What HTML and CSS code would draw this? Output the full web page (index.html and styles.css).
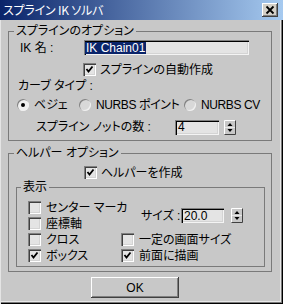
FILE: index.html
```html
<!DOCTYPE html>
<html>
<head>
<meta charset="utf-8">
<link rel="stylesheet" href="styles.css">
</head>
<body>
<div class="window">
  <div class="titlebar">
    <span class="title">スプライン IK ソルバ</span>
    <span class="close"><svg width="16" height="14" viewBox="0 0 16 14"><path d="M4.5 3.5 L11.5 10.5 M11.5 3.5 L4.5 10.5" stroke="#000" stroke-width="1.8" fill="none"/></svg></span>
  </div>
  <div class="content">
    <fieldset class="group g1">
      <legend>スプラインのオプション</legend>
      <div class="row row-ik">
        <span class="lbl lbl-ik">IK 名 :</span>
        <span class="field field-ik"><span class="sel">IK Chain01</span></span>
      </div>
      <div class="row row-auto">
        <span class="cb"><svg width="13" height="13" viewBox="0 0 13 13"><path d="M3.5 6 L5.5 8.5 L9.5 3.5" stroke="#000" stroke-width="1.8" fill="none"/></svg></span>
        <span>スプラインの自動作成</span>
      </div>
      <div class="row row-curve">カーブ タイプ :</div>
      <div class="row row-radio">
        <span class="ritem r1"><span class="radio on"></span>ベジェ</span>
        <span class="ritem r2"><span class="radio"></span><span class="lat">NURBS ポイント</span></span>
        <span class="ritem r3"><span class="radio"></span><span class="lat">NURBS CV</span></span>
      </div>
      <div class="row row-knot">
        <span class="lbl lbl-knot">スプライン ノットの数 :</span>
        <span class="field field-knot"><span class="caret"></span>4</span>
        <span class="spin spin-knot"><svg width="12" height="15" viewBox="0 0 12 15"><rect width="12" height="15" fill="#c8c8c8"/><path d="M0.5 14.5 V0.5 H11.5" stroke="#fff" fill="none"/><path d="M0.5 14.5 H11.5 V0.5" stroke="#404040" fill="none"/><path d="M1 7.5 H11" stroke="#e8e8e8"/><path d="M3.5 6 H8.5 L6 3 Z" fill="#000"/><path d="M3.5 9 H8.5 L6 12 Z" fill="#000"/></svg></span>
      </div>
    </fieldset>
    <fieldset class="group g2">
      <legend>ヘルパー オプション</legend>
      <div class="row row-helper">
        <span class="cb"><svg width="13" height="13" viewBox="0 0 13 13"><path d="M3.5 6 L5.5 8.5 L9.5 3.5" stroke="#000" stroke-width="1.8" fill="none"/></svg></span>
        <span>ヘルパーを作成</span>
      </div>
      <fieldset class="group g3">
        <legend class="lg3">表示</legend>
        <div class="disp">
          <span class="chk a1"><span class="cb"></span>センター マーカ</span>
          <span class="chk a2"><span class="cb"></span>座標軸</span>
          <span class="chk a3"><span class="cb"></span>クロス</span>
          <span class="chk a4"><span class="cb"><svg width="13" height="13" viewBox="0 0 13 13"><path d="M3.5 6 L5.5 8.5 L9.5 3.5" stroke="#000" stroke-width="1.8" fill="none"/></svg></span>ボックス</span>
          <div class="size">
            <span class="lbl lbl-size">サイズ :</span>
            <span class="field field-size"><span class="caret"></span>20.0</span>
            <span class="spin spin-size"><svg width="12" height="15" viewBox="0 0 12 15"><rect width="12" height="15" fill="#c8c8c8"/><path d="M0.5 14.5 V0.5 H11.5" stroke="#fff" fill="none"/><path d="M0.5 14.5 H11.5 V0.5" stroke="#404040" fill="none"/><path d="M1 7.5 H11" stroke="#e8e8e8"/><path d="M3.5 6 H8.5 L6 3 Z" fill="#000"/><path d="M3.5 9 H8.5 L6 12 Z" fill="#000"/></svg></span>
          </div>
          <span class="chk b3"><span class="cb"></span>一定の画面サイズ</span>
          <span class="chk b4"><span class="cb"><svg width="13" height="13" viewBox="0 0 13 13"><path d="M3.5 6 L5.5 8.5 L9.5 3.5" stroke="#000" stroke-width="1.8" fill="none"/></svg></span>前面に描画</span>
        </div>
      </fieldset>
    </fieldset>
    <div class="ok">OK</div>
  </div>
</div>
</body>
</html>
```
FILE: styles.css
```css
* { box-sizing: border-box; }
html, body { margin: 0; padding: 0; }
body {
  width: 283px;
  height: 304px;
  overflow: hidden;
  background: #c8c8c8;
  font-family: "Liberation Sans", "Noto Sans CJK JP", sans-serif;
  font-size: 12px;
  font-feature-settings: "palt";
  color: #000;
}
.window {
  width: 283px;
  height: 304px;
  display: flex;
  flex-direction: column;
  background: #c8c8c8;
  box-shadow: inset 1px 0 #e4e4e4, inset -1px -1px #000, inset -2px -2px #7a7a7a, inset -3px -3px #e8e8e8;
}
.titlebar {
  height: 20px;
  flex: none;
  display: flex;
  align-items: center;
  padding: 0 5px 0 3px;
  background: linear-gradient(to right, #0a246a, #a6caf0);
}
.title {
  color: #fff;
  line-height: 14px;
  font-family: "Noto Sans CJK JP", sans-serif;
  letter-spacing: -0.2px;
}
.close {
  margin-left: auto;
  width: 16px;
  height: 14px;
  background: #d4d0c8;
  box-shadow: inset -1px -1px #404040, inset 1px 1px #fff, inset -2px -2px #808080;
  display: flex;
}
.content {
  padding: 4px 0 0 8px;
  display: flex;
  flex-direction: column;
}
.group {
  margin: 0;
  padding: 0;
  border: 1px solid #7a7a7a;
  min-width: 0;
}
.group legend {
  padding: 0 2px;
  margin-left: 5px;
  height: 14px;
  line-height: 14px;
}
.g1 { width: 264px; padding-bottom: 5px; }
.g2 { width: 264px; margin-top: 5px; padding-bottom: 4px; }
.g3 { margin: 1px 6px 0 7px; }
.g3 .lg3 { margin-left: 4px; }
.row {
  display: flex;
  align-items: center;
  line-height: 14px;
}
.row-ik { margin-top: 2px; height: 15px; padding-left: 11px; }
.lbl-ik { width: 64px; }
.field {
  height: 15px;
  background: #e4e4e4;
  box-shadow: inset 1px 1px #808080, inset 2px 2px #000, inset -1px -1px #f4f4f4, inset -2px -2px #d4d4d4;
  display: flex;
  align-items: center;
  padding-left: 1px;
  line-height: 12px;
  font-family: "Liberation Sans", sans-serif;
}
.field-ik { width: 165px; }
.sel {
  background: #0a246a;
  color: #fff;
  padding: 0 1px;
  margin-top: 1px;
}
.row-auto { margin-top: 8px; height: 13px; padding-left: 74px; gap: 4px; }
.row-helper { margin-top: 6px; height: 13px; padding-left: 75px; gap: 4px; }
.cb {
  width: 13px;
  height: 13px;
  flex: none;
  display: inline-flex;
  background: #e4e4e4;
  box-shadow: inset 1px 1px #808080, inset 2px 2px #404040, inset -1px -1px #fff, inset -2px -2px #d4d4d4;
}
.row-curve { margin-top: 3px; height: 14px; padding-left: 9px; }
.row-radio { margin-top: 5px; height: 14px; padding-left: 8px; }
.ritem { display: flex; align-items: center; gap: 5px; flex: none; }
.r1 { width: 62px; }
.r2 { width: 105px; }
.lat { letter-spacing: -0.4px; }
.radio {
  width: 12px;
  height: 12px;
  border-radius: 50%;
  background: #d8d8d8;
  box-shadow: inset 1px 1px #808080, inset -1px -1px #f0f0f0;
  display: flex;
  align-items: center;
  justify-content: center;
  flex: none;
}
.radio.on { background: #f0f0f0; }
.radio.on::after {
  content: "";
  width: 4px;
  height: 4px;
  border-radius: 50%;
  background: #000;
}
.row-knot { margin-top: 7px; height: 16px; padding-left: 27px; }
.lbl-knot { width: 139px; }
.field-knot { width: 44px; }
.caret {
  width: 1px;
  height: 12px;
  background: #000;
  margin-right: 1px;
}
.spin { display: flex; flex: none; }
.spin-knot { margin-left: 5px; }
.disp {
  display: grid;
  grid-template-columns: 93px 1fr;
  grid-template-rows: 13px 13px 13px 13px;
  row-gap: 3px;
  padding: 7px 0 4px 11px;
  line-height: 14px;
}
.chk { display: flex; align-items: center; gap: 5px; white-space: nowrap; }
.a1 { grid-column: 1; grid-row: 1; }
.a2 { grid-column: 1; grid-row: 2; }
.a3 { grid-column: 1; grid-row: 3; }
.a4 { grid-column: 1; grid-row: 4; }
.b3 { grid-column: 2; grid-row: 3; }
.b4 { grid-column: 2; grid-row: 4; }
.size {
  grid-column: 2;
  grid-row: 1 / 3;
  align-self: start;
  margin-top: 7px;
  padding-left: 20px;
  display: flex;
  align-items: center;
}
.lbl-size { width: 40px; }
.field-size { width: 43px; }
.spin-size { margin-left: 7px; }
.ok {
  width: 88px;
  height: 21px;
  margin: 5px 0 0 83px;
  background: #c8c8c8;
  box-shadow: inset -1px -1px #404040, inset 1px 1px #fff, inset -2px -2px #808080;
  display: flex;
  align-items: center;
  justify-content: center;
  font-family: "Liberation Sans", sans-serif;
}
```
